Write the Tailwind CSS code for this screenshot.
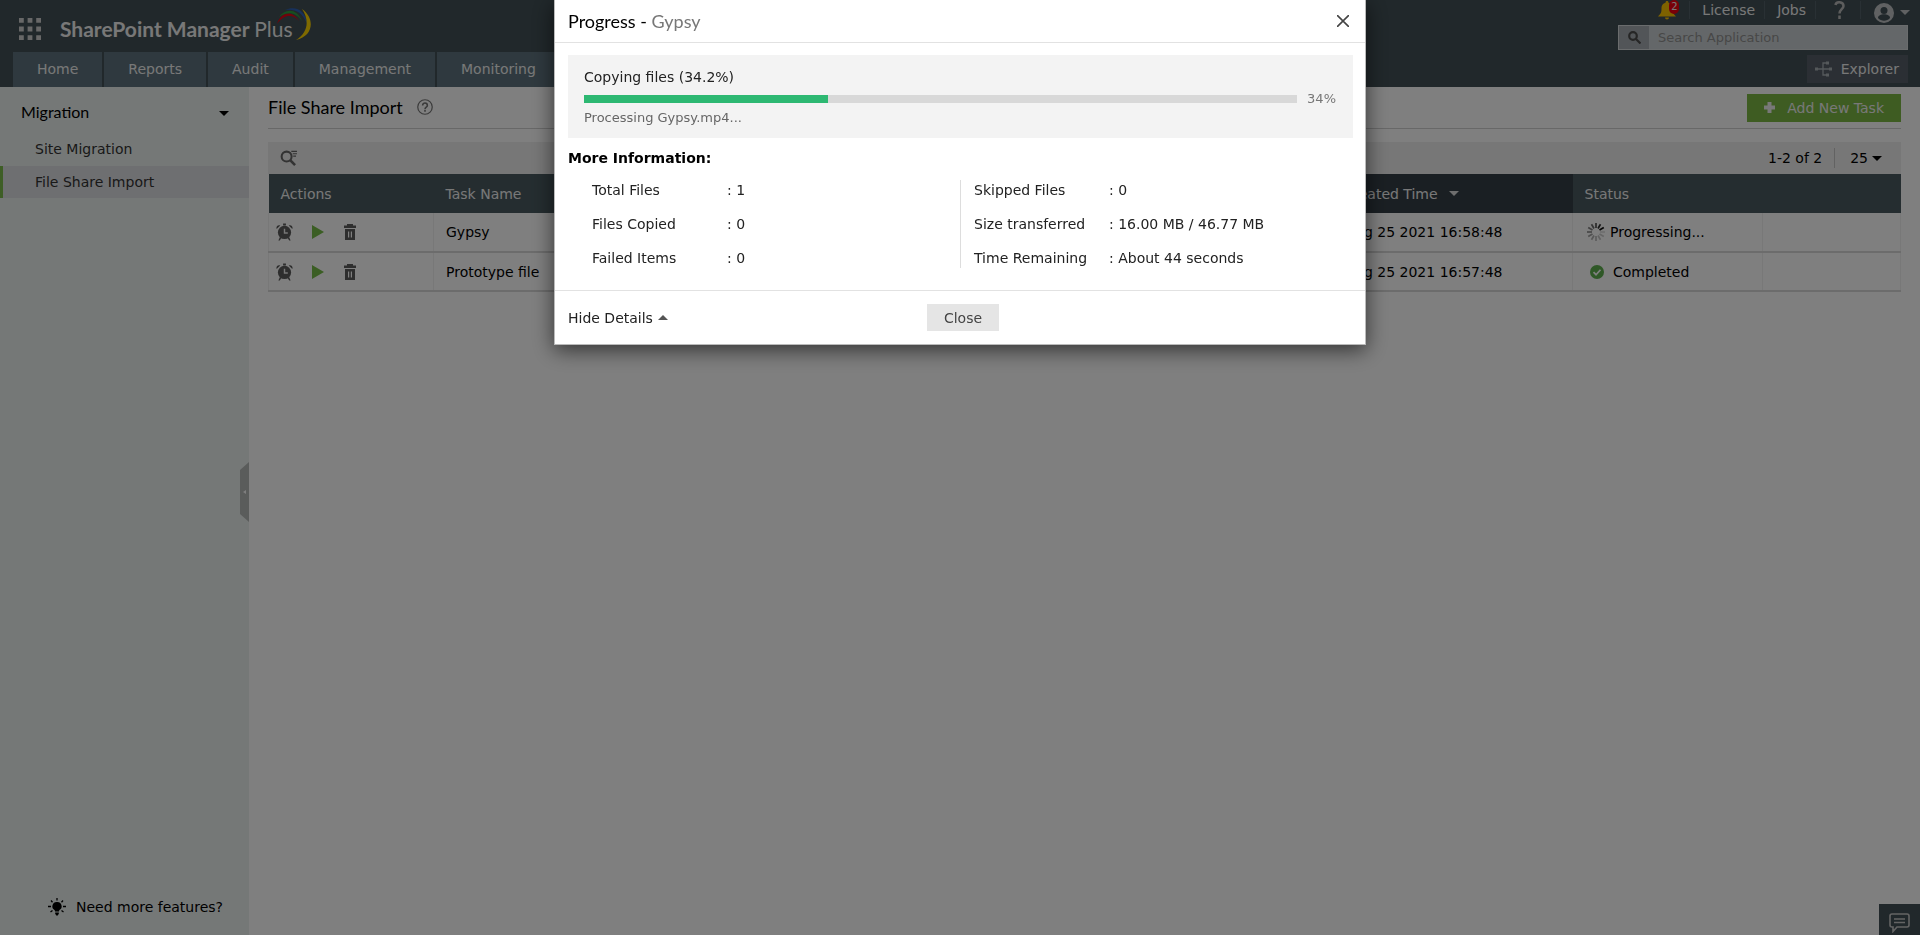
<!DOCTYPE html>
<html lang="en">
<head>
  <meta charset="UTF-8" />
  <meta name="viewport" content="width=device-width, initial-scale=1.0" />
  <title>SharePoint Manager Plus</title>
  <script src="https://cdn.jsdelivr.net/npm/@tailwindcss/browser@4"></script>
</head>
<body class="bg-white text-black text-[14px] leading-5 font-['DejaVu_Sans',sans-serif] h-screen flex flex-col overflow-hidden">

  <!-- Icons used more than once -->
  <svg class="hidden">
    <symbol id="clock" viewBox="0 0 18 18">
      <circle cx="9" cy="9.500" r="7" />
      <path d="M.5 5.500C0 3 2 1 4.500 2L1 5.500zM17.500 5.500C18 3 16 1 13.500 2L17 5.500zM7.500 0h3v2h-3zM4 14.500l1.500 1L4 18H2.500zM14 14.500l-1.500 1L14 18h1.500z" />
      <path d="M9 5.500v4.500h3.500" fill="none" stroke="#eee" stroke-width="1.500" />
    </symbol>
    <symbol id="play" viewBox="0 0 12 14"><path d="M0 0l12 7-12 7z" /></symbol>
    <symbol id="trash" viewBox="0 0 12 16">
      <path d="M3 0h6v1.500h3v2.500H0V1.500h3z" />
      <path fill-rule="evenodd" d="M1 5h10v11H1zM4 7.500v6h1.200v-6zM6.800 7.500v6H8v-6z" />
    </symbol>
    <symbol id="down" viewBox="0 0 10 5"><path d="M0 0h10L5 5z" /></symbol>
  </svg>

  <header class="bg-[#425056] text-[#f0f0f0] h-[87px] shrink-0 flex justify-between">
    <div class="flex flex-col justify-between">
      <div class="flex items-center gap-[19px] pl-[19px] pt-[17px]">
        <svg class="w-[22px] h-[22px]" viewBox="0 0 23 23" fill="#d0d0d0">
          <path d="M0 0h5v5H0zM9 0h5v5H9zM18 0h5v5h-5zM0 9h5v5H0zM9 9h5v5H9zM18 9h5v5h-5zM0 18h5v5H0zM9 18h5v5H9zM18 18h5v5h-5z" />
        </svg>
        <a href="#" class="relative font-['Lato',sans-serif] text-[21px] leading-6 font-bold">SharePoint Manager <span class="font-normal">Plus</span>
          <svg class="absolute -top-[10px] -right-[19px] w-[36px] h-[34px]" viewBox="0 0 36 34">
            <path d="M1 17C5 4 17 3 23 14C17 7 8 7 1 17z" fill="#e30613" />
            <path d="M3 10C9 1 21 1 26 14C20 5 11 4 3 10z" fill="#2e9e3f" />
            <path d="M9 3C20-2 30 4 31 17C26 5 20 2 9 3z" fill="#2f62b8" />
            <path d="M26 2C39 11 38 29 20 33C33 25 33 12 26 2z" fill="#ffd500" />
          </svg>
        </a>
      </div>
      <nav class="flex gap-[2px] pl-[13px] h-[35px]">
        <a href="#" class="bg-[#5f737e] px-6 leading-[34px]">Home</a>
        <a href="#" class="bg-[#5f737e] px-6 leading-[34px]">Reports</a>
        <a href="#" class="bg-[#5f737e] px-6 leading-[34px]">Audit</a>
        <a href="#" class="bg-[#5f737e] px-6 leading-[34px]">Management</a>
        <a href="#" class="bg-[#5f737e] px-6 leading-[34px]">Monitoring</a>
      </nav>
    </div>

    <div class="flex flex-col items-end pr-[12px]">
      <div class="flex items-center h-[20px] mb-[5px] -mr-[2px]">
        <a href="#" aria-label="Notifications" class="relative mr-[13px]">
          <svg class="w-[18px] h-[19px]" viewBox="0 0 18 19" fill="#fdc500">
            <path d="M9 0c1 0 1.500.7 1.500 1.700C14 3 14.500 5 14.500 8c0 4 1 5 3.500 7.500H0C2.500 13 3.500 12 3.500 8c0-3 .5-5 4-6.300C7.500.7 8 0 9 0zM7 16.500h4a2 2 0 0 1-4 0z" />
          </svg>
          <span class="absolute -top-px left-[11px] w-[10px] h-[14px] rounded-full bg-[#f00010] text-[10px] leading-[14px] text-center">2</span>
        </a>
        <a href="#" class="border-l border-[#536168] pl-3 pr-[9px] leading-[18px]">License</a>
        <a href="#" class="border-l border-[#536168] pl-3 pr-[9px] leading-[18px]">Jobs</a>
        <a href="#" aria-label="Help" class="border-l border-[#536168] pl-[18px] pr-[15px] h-[18px]">
          <svg class="w-[11px] h-[18px]" viewBox="0 0 11 18" fill="none" stroke="#bbb" stroke-width="2.500"><path d="M1.500 4C2 0 9.500.5 9.500 5c0 3-4 3.500-4 7.500M5.500 14.500V18" /></svg>
        </a>
        <a href="#" aria-label="Account" class="border-l border-[#536168] pl-[13px] flex items-center gap-[6px] h-[18px]">
          <svg class="w-[20px] h-[20px] mt-[5px]" viewBox="0 0 20 20"><circle cx="10" cy="10" r="10" fill="#c0c3c5" /><circle cx="10" cy="7.500" r="3.500" fill="#425056" /><path d="M4 15c0-5 12-5 12 0-3 3.500-9 3.500-12 0z" fill="#425056" /></svg>
          <svg class="w-[10px] h-[5px] mt-[5px]" fill="#c0c3c5"><use href="#down" /></svg>
        </a>
      </div>
      <label class="flex w-[290px] h-[25px] bg-[#c9ced2] border border-[#d5d9db]">
        <span class="w-[30px] bg-[#a4abb0] flex items-center justify-center">
          <svg class="w-[13px] h-[13px]" viewBox="0 0 13 13" fill="none" stroke="#4c4c4c" stroke-width="2.200"><circle cx="5" cy="5" r="3.800" /><path d="M8 8l4.500 4.500" /></svg>
        </span>
        <input type="text" aria-label="Search Application" placeholder="Search Application" class="flex-1 min-w-0 px-[9px] text-[13px] outline-none placeholder:text-[#8f8f8f]" />
      </label>
      <button class="mt-[5px] h-[28px] bg-[#565f68] flex items-center gap-[9px] pl-2 pr-[9px]">
        <svg class="w-[17px] h-[18px]" viewBox="0 0 17 18" fill="none" stroke="#aab2b7" stroke-width="1.300"><path d="M1 9h14M13 3H8v12h5" /><path d="M0 7.500h3v3H0zM14 7.500h3v3h-3zM11 1.500h3v3h-3zM11 13.500h3v3h-3z" fill="#aab2b7" stroke="none" /></svg>
        Explorer
      </button>
    </div>
  </header>

  <div class="flex flex-1 min-h-0">
    <aside class="relative w-[249px] shrink-0 bg-[#ebf1ef] flex flex-col justify-between">
      <div>
        <div class="flex items-center justify-between pl-[21px] pr-5 pt-[15px] pb-[11px] font-['Lato',sans-serif] text-[16px]">Migration
          <svg class="w-[10px] h-[5px] mt-[3px]"><use href="#down" /></svg>
        </div>
        <a href="#" class="block pl-[35px] leading-8 text-[#333] mb-px">Site Migration</a>
        <a href="#" class="block pl-[32px] leading-8 text-[#333] border-l-3 border-[#7cbc4c] bg-[#dcdee2]">File Share Import</a>
      </div>
      <a href="#" class="flex items-center gap-[10px] pl-[48px] pb-[18px]">
        <svg class="w-[18px] h-[18px]" viewBox="0 0 18 18">
          <path d="M9 4a4.300 4.300 0 0 1 2.500 8c-.5.500-.5 1-.5 1.500H7c0-.5 0-1-.5-1.500A4.300 4.300 0 0 1 9 4zM7.200 14.500h3.600v1.500L9 18l-1.800-2z" />
          <path d="M9 0v2.500M3 2.500l1.500 1.700M15 2.500l-1.500 1.700M0 8.500h3M15 8.500h3M2.500 14l2-1.500M15.500 14l-2-1.500" stroke="#000" stroke-width="1.300" />
        </svg>
        Need more features?
      </a>
      <button aria-label="Collapse menu" class="absolute right-0 top-[375px]">
        <svg class="block w-[9px] h-[60px]" viewBox="0 0 9 60"><path d="M9 0L0 8v44l9 8z" fill="#b5b8b7" /><path d="M6 28v4l-3-2z" fill="#fff" /></svg>
      </button>
    </aside>

    <main class="flex-1 min-w-0 pl-[19px] pr-[19px]">
      <div class="flex items-center justify-between h-[42px] border-b border-[#d0d0d0]">
        <h1 class="flex items-center gap-[14px] pb-[2px] font-['Lato',sans-serif] text-[18px]">File Share Import
          <svg class="w-[16px] h-[16px]" viewBox="0 0 17 17" fill="none" stroke="#777"><circle cx="8.500" cy="8.500" r="7.700" stroke-width="1.300" /><path d="M6 6.800c0-3.500 5-3.200 5 0 0 2-2.500 1.700-2.500 4M8.500 11.800v1.700" stroke-width="1.700" /></svg>
        </h1>
        <button class="h-[28px] bg-[#7cb944] text-[#f0f0f0] flex items-center gap-3 px-[17px]">
          <svg class="w-[11px] h-[11px]" viewBox="0 0 11 11" fill="#f0f0f0"><path d="M3.500 0h4v3.500H11v4H7.500V11h-4V7.500H0v-4h3.500z" /></svg>
          Add New Task
        </button>
      </div>

      <div class="mt-[13px] h-[32px] bg-[#efefef] flex items-center justify-between pl-3 pr-[19px]">
        <button aria-label="Search">
          <svg class="block w-[17px] h-[16px]" viewBox="0 0 18 17" fill="none" stroke="#666"><circle cx="7" cy="7" r="5.300" stroke-width="2.200" /><path d="M10.500 10.500l5.500 5.500" stroke-width="2.800" /><path d="M12 1.500h6M13.500 4h4.500M14 6.500h3" stroke-width="1.200" /></svg>
        </button>
        <div class="flex items-center">
          <span class="pr-[12px]">1-2 of 2</span>
          <button class="flex items-center gap-1 border-l border-[#c4c4c4] pl-[15px]">25
            <svg class="w-[10px] h-[5px]"><use href="#down" /></svg>
          </button>
        </div>
      </div>

      <table class="w-full table-fixed text-left">
        <colgroup>
          <col class="w-[165px]" /><col class="w-[300px]" /><col /><col class="w-[240px]" /><col class="w-[190px]" /><col class="w-[138px]" />
        </colgroup>
        <thead>
          <tr class="bg-[#4a5b61] text-[#f0f0f0] h-[39px]">
            <th class="font-normal pl-3">Actions</th>
            <th class="font-normal pl-3">Task Name</th>
            <th></th>
            <th class="font-normal pl-[11px] bg-[#353f47]"><span class="flex items-center gap-[11px]">Created Time <svg class="w-[10px] h-[5px]" fill="#ddd"><use href="#down" /></svg></span></th>
            <th class="font-normal pl-3">Status</th>
            <th></th>
          </tr>
        </thead>
        <tbody>
          <tr class="h-[39px] border-b-2 border-[#d8d8d8]">
            <td class="border-x border-[#f0f0f0] pl-[7px]">
              <div class="flex items-center gap-[19px]">
                <button aria-label="Schedule"><svg class="block w-[17px] h-[18px]" fill="#5c5c5c"><use href="#clock" /></svg></button>
                <button aria-label="Run"><svg class="block w-[12px] h-[14px]" fill="#76bc48"><use href="#play" /></svg></button>
                <button aria-label="Delete"><svg class="block w-[14px] h-[16px]" fill="#5c5c5c"><use href="#trash" /></svg></button>
              </div>
            </td>
            <td class="pl-3">Gypsy</td>
            <td></td>
            <td class="pl-[13px]">Aug 25 2021 16:58:48</td>
            <td class="border-x border-[#f0f0f0] pl-[14px]">
              <div class="flex items-center gap-[5px]">
                <svg class="w-[18px] h-[18px]" viewBox="0 0 18 18" stroke-width="1.700">
                  <path d="M9 0v5" stroke="#555" /><path d="M13.500 1.200L11 5.500" stroke="#333" /><path d="M16.800 4.500L12.500 7" stroke="#111" /><path d="M18 9h-5" stroke="#ddd" /><path d="M16.800 13.500L12.500 11" stroke="#ccc" /><path d="M13.500 16.800L11 12.500" stroke="#c4c4c4" /><path d="M9 18v-5" stroke="#bbb" /><path d="M4.500 16.800L7 12.500" stroke="#b0b0b0" /><path d="M1.200 13.500L5.500 11" stroke="#a0a0a0" /><path d="M0 9h5" stroke="#909090" /><path d="M1.200 4.500L5.500 7" stroke="#808080" /><path d="M4.500 1.200L7 5.500" stroke="#6c6c6c" />
                </svg>
                Progressing...
              </div>
            </td>
            <td class="border-r border-[#f0f0f0]"></td>
          </tr>
          <tr class="h-[39px] border-b-2 border-[#d8d8d8]">
            <td class="border-x border-[#f0f0f0] pl-[7px]">
              <div class="flex items-center gap-[19px]">
                <button aria-label="Schedule"><svg class="block w-[17px] h-[18px]" fill="#5c5c5c"><use href="#clock" /></svg></button>
                <button aria-label="Run"><svg class="block w-[12px] h-[14px]" fill="#76bc48"><use href="#play" /></svg></button>
                <button aria-label="Delete"><svg class="block w-[14px] h-[16px]" fill="#5c5c5c"><use href="#trash" /></svg></button>
              </div>
            </td>
            <td class="pl-3">Prototype file</td>
            <td></td>
            <td class="pl-[13px]">Aug 25 2021 16:57:48</td>
            <td class="border-x border-[#f0f0f0] pl-[17px]">
              <div class="flex items-center gap-[9px]">
                <svg class="w-[14px] h-[14px]" viewBox="0 0 14 14"><circle cx="7" cy="7" r="7" fill="#5fb04e" /><path d="M3.500 7.200L6 9.700l4.500-5" fill="none" stroke="#fff" stroke-width="1.700" /></svg>
                Completed
              </div>
            </td>
            <td class="border-r border-[#f0f0f0]"></td>
          </tr>
        </tbody>
      </table>
    </main>
  </div>

  <button aria-label="Chat" class="fixed right-0 bottom-0 w-[41px] h-[31px] bg-[#425056] flex justify-center pt-[9px]">
    <svg class="w-[21px] h-[20px]" viewBox="0 0 21 20" fill="none" stroke="#c8c8c8" stroke-width="1.600"><path d="M3 1h15q2 0 2 2v9q0 2-2 2H8l-4 4.500V14H3q-2 0-2-2V3q0-2 2-2zM5 6h11M5 9.500h11" /></svg>
  </button>

  <div class="fixed inset-0 bg-black/50"></div>

  <!-- Progress dialog -->
  <div role="dialog" aria-label="Progress" class="fixed top-0 inset-x-0 mx-auto w-[812px] bg-white border border-t-0 border-[#bbb] shadow-[0_5px_20px_rgba(0,0,0,0.6)] text-[#222]">
    <div class="flex items-center justify-between h-[43px] border-b border-[#e2e2e2] pl-[13px] pr-4">
      <h2 class="font-['Lato',sans-serif] text-[18px] text-black">Progress - <span class="text-[#777]">Gypsy</span></h2>
      <button aria-label="Close dialog"><svg class="block w-[12px] h-[12px]" viewBox="0 0 12 12" stroke="#444" stroke-width="1.600"><path d="M0 0l12 12M12 0L0 12" /></svg></button>
    </div>

    <div class="ml-[13px] mr-3 mt-3 h-[83px] bg-[#f3f3f3] pl-4 pr-[17px] pt-3">
      <p>Copying files (34.2%)</p>
      <div class="flex items-center gap-[10px] h-[18px] mt-[3px] text-[13px] text-[#777]">
        <div class="flex-1 h-2 bg-[#d8d8d8]"><div class="h-2 bg-[#2db872]" style="width: 34.2%"></div></div>
        34%
      </div>
      <p class="text-[13px] text-[#666]">Processing Gypsy.mp4...</p>
    </div>

    <h3 class="font-bold text-black px-[13px] mt-[10px]">More Information:</h3>
    <div class="grid grid-cols-[368px_1fr] mt-3 mb-[22px] ml-[37px]">
      <dl class="grid grid-cols-[135px_1fr] gap-y-[14px]">
        <dt>Total Files</dt><dd>: 1</dd>
        <dt>Files Copied</dt><dd>: 0</dd>
        <dt>Failed Items</dt><dd>: 0</dd>
      </dl>
      <dl class="grid grid-cols-[135px_1fr] gap-y-[14px] border-l border-[#ddd] pl-[13px]">
        <dt>Skipped Files</dt><dd>: 0</dd>
        <dt>Size transferred</dt><dd>: 16.00 MB / 46.77 MB</dd>
        <dt>Time Remaining</dt><dd>: About 44 seconds</dd>
      </dl>
    </div>

    <div class="grid grid-cols-[1fr_auto_1fr] items-center h-[54px] border-t border-[#e2e2e2] pl-[13px] pr-[7px]">
      <button class="flex items-center gap-[5px]">Hide Details
        <svg class="w-[10px] h-[5px] rotate-180" fill="#555"><use href="#down" /></svg>
      </button>
      <button class="bg-[#e5e5e5] text-[#444] w-[72px] h-[27px]">Close</button>
    </div>
  </div>
</body>
</html>
